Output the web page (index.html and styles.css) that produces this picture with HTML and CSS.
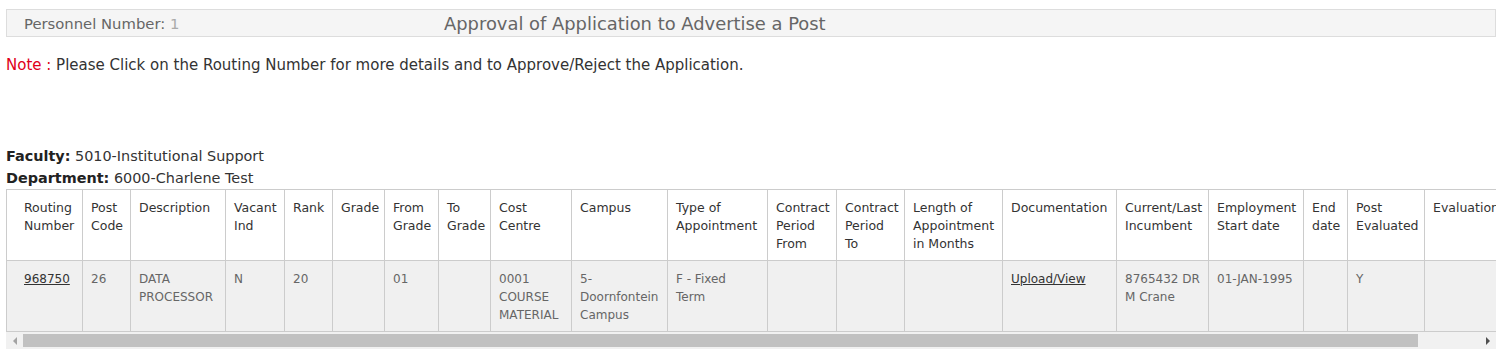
FILE: index.html
```html
<!DOCTYPE html>
<html lang="en">
<head>
<meta charset="utf-8">
<title>Approval of Application to Advertise a Post</title>
<link rel="stylesheet" href="styles.css">
</head>
<body>
<div class="page">
  <div class="topbar">
    <div class="personnel">Personnel Number: <span class="pnum">1</span></div>
    <div class="title">Approval of Application to Advertise a Post</div>
  </div>
  <p class="note"><span class="note-label">Note :</span> Please Click on the Routing Number for more details and to Approve/Reject the Application.</p>

  <div class="meta">
    <div><span class="meta-label">Faculty:</span> 5010-Institutional Support</div>
    <div><span class="meta-label">Department:</span> 6000-Charlene Test</div>
  </div>

  <div class="table-wrap">
    <table class="grid">
      <colgroup>
        <col style="width:76px"><col style="width:48px"><col style="width:95px"><col style="width:59px">
        <col style="width:48px"><col style="width:52px"><col style="width:54px"><col style="width:52px">
        <col style="width:81px"><col style="width:96px"><col style="width:100px"><col style="width:69px">
        <col style="width:68px"><col style="width:98px"><col style="width:114px"><col style="width:92px">
        <col style="width:95px"><col style="width:44px"><col style="width:77px"><col style="width:130px">
      </colgroup>
      <thead>
        <tr>
          <th class="first">Routing Number</th>
          <th>Post Code</th>
          <th>Description</th>
          <th>Vacant Ind</th>
          <th>Rank</th>
          <th>Grade</th>
          <th>From Grade</th>
          <th>To Grade</th>
          <th>Cost Centre</th>
          <th>Campus</th>
          <th>Type of Appointment</th>
          <th>Contract Period From</th>
          <th>Contract Period To</th>
          <th>Length of Appointment in Months</th>
          <th>Documentation</th>
          <th>Current/Last Incumbent</th>
          <th>Employment Start date</th>
          <th>End date</th>
          <th>Post Evaluated</th>
          <th>Evaluation date</th>
        </tr>
      </thead>
      <tbody>
        <tr>
          <td class="first"><a href="#" class="link">968750</a></td>
          <td>26</td>
          <td>DATA PROCESSOR</td>
          <td>N</td>
          <td>20</td>
          <td></td>
          <td>01</td>
          <td></td>
          <td>0001 COURSE MATERIAL</td>
          <td>5-Doornfontein Campus</td>
          <td class="appt">F - Fixed Term</td>
          <td></td>
          <td></td>
          <td></td>
          <td><a href="#" class="link">Upload/View</a></td>
          <td>8765432 DR M Crane</td>
          <td>01-JAN-1995</td>
          <td></td>
          <td>Y</td>
          <td></td>
        </tr>
      </tbody>
    </table>
  </div>
  <div class="hscroll" aria-hidden="true">
    <div class="hs-btn hs-left"><span class="arrow-left"></span></div>
    <div class="hs-track"><div class="hs-thumb"></div></div>
    <div class="hs-btn hs-right"><span class="arrow-right"></span></div>
  </div>
</div>
</body>
</html>
```

FILE: styles.css
```css
html, body {
  margin: 0;
  padding: 0;
  background: #ffffff;
}

body {
  font-family: "DejaVu Sans", "Open Sans", sans-serif;
  color: #333333;
}

.page {
  padding: 9px 9px 0 6px;
}

.topbar {
  display: grid;
  grid-template-columns: 437px 1fr;
  align-items: center;
  height: 26px;
  background: #f5f5f5;
  border: 1px solid #dddddd;
}

.personnel {
  padding-left: 17px;
  font-size: 14.8px;
  color: #666666;
}

.pnum {
  color: #aaaaaa;
}

.title {
  font-size: 17.9px;
  color: #666666;
}

.note {
  margin: 18px 0 0 0;
  font-size: 15px;
  line-height: 20px;
  color: #333333;
}

.note-label {
  color: #e0001a;
}

.meta {
  margin-top: 70px;
  font-size: 14.4px;
  line-height: 22px;
  color: #333333;
}

.meta-label {
  font-weight: 600;
  color: #222222;
}

.table-wrap {
  width: 1490px;
  overflow: hidden;
}

.grid {
  table-layout: fixed;
  width: 1548px;
  border-collapse: collapse;
  font-size: 12.5px;
  line-height: 18px;
}

.grid th,
.grid td {
  border: 1px solid #cccccc;
  padding: 9px 8px 7px 8px;
  text-align: left;
  vertical-align: top;
}

.grid th {
  font-weight: normal;
  color: #333333;
  background: #ffffff;
  height: 54px;
}

.grid td {
  font-size: 12px;
  color: #666666;
  background: #f0f0f0;
  height: 54px;
}

.grid .first {
  padding-left: 17px;
}

.grid .appt {
  padding-right: 14px;
}

.link {
  color: #333333;
  text-decoration: underline;
}

/* decorative horizontal scrollbar */
.hscroll {
  display: flex;
  width: 1490px;
  height: 17px;
  background: #f1f1f1;
}

.hs-btn {
  width: 17px;
  display: flex;
  align-items: center;
  justify-content: center;
}

.arrow-left {
  width: 0;
  height: 0;
  border-top: 4px solid transparent;
  border-bottom: 4px solid transparent;
  border-right: 4px solid #a3a3a3;
}

.arrow-right {
  width: 0;
  height: 0;
  border-top: 4px solid transparent;
  border-bottom: 4px solid transparent;
  border-left: 4px solid #505050;
}

.hs-track {
  flex: 1;
  padding: 2px 0;
}

.hs-thumb {
  width: 1395px;
  height: 13px;
  background: #c1c1c1;
}
```
